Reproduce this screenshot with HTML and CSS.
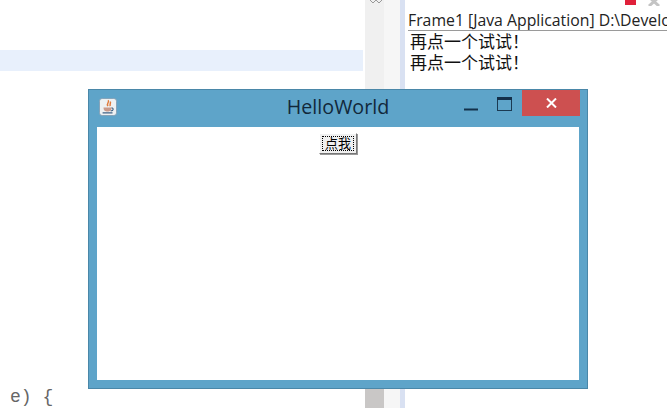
FILE: index.html
```html
<!DOCTYPE html>
<html lang="zh">
<head>
<meta charset="utf-8">
<title>HelloWorld</title>
<link rel="stylesheet" href="styles.css">
</head>
<body>
<div class="ide">
  <section class="editor">
    <div class="current-line"></div>
    <div class="code">e) {</div>
  </section>
  <div class="scroll-col">
    <div class="track">
      <svg class="chevrons" width="14" height="4" viewBox="0 0 14 4"><path d="M1 0l3 3 3-3M7 0l3 3 3-3" fill="none" stroke="#999" stroke-width="1"/></svg>
      <div class="spacer"></div>
      <div class="thumb"></div>
    </div>
    <div class="track-light"></div>
  </div>
  <div class="sash"></div>
  <section class="console">
    <div class="toolbar">
      <span class="stop"></span>
      <svg class="remove" width="14" height="6" viewBox="0 0 14 6"><path d="M2 -3l10 9M12 -3L2 6" stroke="#c4c4c4" stroke-width="3" fill="none"/></svg>
    </div>
    <div class="console-title">Frame1 [Java Application] D:\Develo</div>
    <div class="output">再点一个试试！</div>
    <div class="output">再点一个试试！</div>
  </section>
</div>
<div class="window">
  <header class="titlebar">
    <svg class="app-icon" width="18" height="18" viewBox="0 0 20 20">
      <rect x="0.5" y="0.5" width="19" height="19" rx="3" fill="#eef1f2" stroke="#7f9db3"/>
      <path d="M10 2.500c2.500 2-2.500 3.500 0 6.500M12.500 4c1 2-1 3 0 5" stroke="#e07a3a" stroke-width="1.6" fill="none"/>
      <path d="M5 10.500h9c0 3.500-2 4.500-4.500 4.500S5 14 5 10.500z" fill="#c99a8a"/>
      <path d="M14 11c2.500 0 2.500 3-1 3.500M4 16.500h11" stroke="#3f6285" stroke-width="1.200" fill="none"/>
    </svg>
    <h1 class="title">HelloWorld</h1>
    <div class="controls">
      <svg class="minimize" width="14" height="3" viewBox="0 0 14 3"><rect width="14" height="2" y="0.500" fill="#12304a"/></svg>
      <svg class="maximize" width="15" height="14" viewBox="0 0 15 14"><rect x="0.500" y="0.500" width="14" height="13" fill="none" stroke="#1b3a52"/><rect width="15" height="3" fill="#14304a"/></svg>
      <button class="close" type="button" aria-label="关闭">
        <svg width="11" height="10" viewBox="0 0 11 10"><path d="M1 0.500l9 9M10 0.500l-9 9" stroke="#fff" stroke-width="2"/></svg>
      </button>
    </div>
  </header>
  <div class="client">
    <button class="action" type="button"><span class="focus">点我</span></button>
  </div>
</div>
</body>
</html>
```
FILE: styles.css
```css
* { box-sizing: border-box; }
html, body { margin: 0; padding: 0; height: 100%; overflow: hidden; background: #fff; }
body { position: relative; width: 667px; height: 408px; font-family: "Noto Sans CJK SC", "Liberation Sans", sans-serif; }

.ide { display: flex; height: 408px; }

.editor { width: 365px; display: flex; flex-direction: column; padding-top: 50px; }
.current-line { height: 21px; width: 363px; background: #e8f0fc; }
.code {
  margin-top: auto;
  padding: 0 0 1px 10px;
  font: 18px/20px "Liberation Mono", monospace;
  color: #666;
}

.scroll-col { width: 35px; display: flex; }
.track { width: 19px; display: flex; flex-direction: column; background: #f0f0f0; }
.chevrons { margin-left: 4px; flex: none; }
.spacer { flex: 1; }
.thumb { height: 20px; background: #c9c7c6; }
.track-light { width: 16px; background: #f6f6f6; }

.sash { width: 5px; background: #d9e1f2; }

.console { flex: 1; min-width: 0; padding-left: 3px; overflow: hidden; }
.toolbar { height: 11px; display: flex; align-items: flex-start; padding-left: 217px; gap: 11px; }
.stop { width: 11px; height: 5px; background: #e0203a; }
.console-title {
  height: 20px;
  font: 15.8px/19px "Open Sans", "Liberation Sans", sans-serif;
  color: #222;
  white-space: nowrap;
  overflow: hidden;
  border-bottom: 1px solid #9a9a9a;
}
.output { padding-left: 2px; font-size: 17px; line-height: 19px; height: 21px; color: #111; white-space: nowrap; }

.window {
  position: absolute;
  left: 88px;
  top: 89px;
  width: 500px;
  height: 300px;
  display: flex;
  flex-direction: column;
  background: #5ea4c9;
  border: 1px solid #4a87a8;
  padding: 0 8px 8px 8px;
}
.titlebar { position: relative; height: 37px; flex: none; display: flex; align-items: flex-start; }
.app-icon { margin: 8px 0 0 2px; flex: none; }
.title {
  position: absolute;
  left: 0;
  right: 0;
  top: 5px;
  margin: 0;
  text-align: center;
  font: 400 19.7px/24px "Open Sans", "Liberation Sans", sans-serif;
  color: #12283a;
}
.controls { position: relative; margin-left: auto; margin-right: -1px; display: flex; align-items: flex-start; }
.minimize { margin: 18px 19px 0 0; }
.maximize { margin: 7px 10px 0 0; }
.close {
  width: 58px;
  height: 26px;
  padding: 0;
  border: 0;
  background: #cd5050;
  display: flex;
  align-items: center;
  justify-content: center;
}
.client { flex: 1; background: #fff; display: flex; justify-content: center; align-items: flex-start; padding: 6px 0 0 0; }
.action {
  width: 38px;
  height: 21px;
  padding: 2px;
  background: #f0f0f0;
  border: 1px solid;
  border-color: #fff #777 #777 #fff;
  box-shadow: 1px 1px 0 #999;
  font-family: "Noto Sans CJK SC", sans-serif;
  font-size: 13px;
  color: #000;
  display: flex;
}
.focus { flex: 1; line-height: 11px; border: 1px dotted #000; text-align: center; }
```
